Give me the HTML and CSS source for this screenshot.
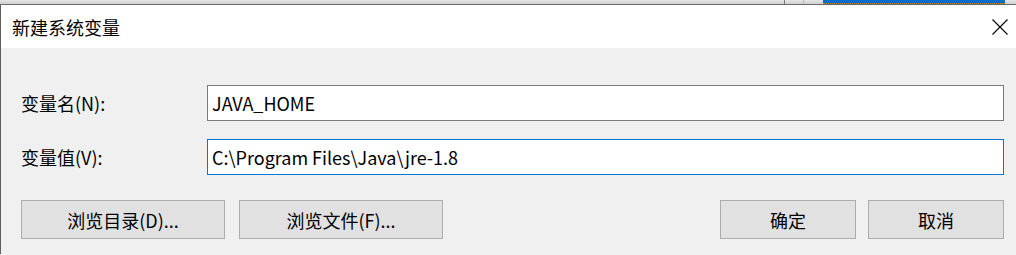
FILE: index.html
```html
<!DOCTYPE html>
<html lang="zh-CN">
<head>
<meta charset="utf-8">
<title>新建系统变量</title>
<link rel="stylesheet" href="styles.css">
</head>
<body>
<div class="backdrop">
  <div class="bg-seg bg-a"></div>
  <div class="bg-seg bg-b"></div>
  <div class="bg-seg bg-c"></div>
  <div class="bg-seg bg-blue"></div>
  <div class="bg-seg bg-d"></div>
</div>
<div class="dialog">
  <div class="titlebar">
    <span class="title">新建系统变量</span>
    <span class="close" aria-label="关闭">
      <svg width="16" height="16" viewBox="0 0 16 16"><path d="M0.5 0.5L15.5 15.5M15.5 0.5L0.5 15.5" stroke="#000" stroke-width="1.1" fill="none"/></svg>
    </span>
  </div>
  <div class="content">
    <div class="fields">
      <label class="label">变量名(N):</label>
      <div class="input">JAVA_HOME</div>
      <label class="label">变量值(V):</label>
      <div class="input focused">C:\Program Files\Java\jre-1.8</div>
    </div>
    <div class="buttons">
      <div class="btn-group">
        <button class="btn wide">浏览目录(D)...</button>
        <button class="btn wide">浏览文件(F)...</button>
      </div>
      <div class="btn-group small-gap">
        <button class="btn narrow">确定</button>
        <button class="btn narrow">取消</button>
      </div>
    </div>
  </div>
</div>
</body>
</html>
```
FILE: styles.css
```css
html, body {
  margin: 0;
  padding: 0;
}
body {
  width: 1016px;
  height: 255px;
  overflow: hidden;
  background: #f0f0f0;
  font-family: "Noto Sans CJK SC", "Noto Sans", sans-serif;
  font-size: 18px;
  color: #000;
}
.backdrop {
  height: 4px;
  display: flex;
  background: linear-gradient(#e4e4e4, #cfcfcf);
}
.bg-seg { height: 4px; }
.bg-a { width: 784px; }
.bg-b { width: 19px; border-left: 1px solid #7a7a7a; box-sizing: border-box; }
.bg-c { width: 20px; border-left: 1px solid #b8b8b8; box-sizing: border-box; }
.bg-blue {
  width: 182px;
  background: #0f6cc4;
  border-bottom: 1px dotted #c58a3a;
  box-sizing: border-box;
}
.bg-d { flex: 1; }
.dialog {
  border-top: 1px solid #6b6b6b;
  border-left: 1px solid #5e5e5e;
  height: 250px;
  box-sizing: border-box;
  background: #f0f0f0;
}
.titlebar {
  height: 43px;
  background: #fff;
  display: flex;
  align-items: center;
  justify-content: space-between;
  padding: 0 8px 0 11px;
}
.title {
  font-size: 18px;
  line-height: 1;
  padding-top: 1px;
}
.close {
  width: 16px;
  height: 16px;
  display: flex;
  margin-right: 0;
}
.close svg { display: block; }
.content {
  padding: 37px 12px 0 20px;
}
.fields {
  display: grid;
  grid-template-columns: 186px 1fr;
  row-gap: 18px;
  align-items: center;
}
.label {
  font-size: 18px;
  line-height: 1;
}
.input {
  height: 36px;
  box-sizing: border-box;
  border: 1px solid #7a7a7a;
  background: #fff;
  padding: 0 4px;
  display: flex;
  align-items: center;
  font-size: 18px;
  white-space: nowrap;
}
.input.focused {
  border-color: #0078d7;
}
.buttons {
  display: flex;
  justify-content: space-between;
  margin-top: 25px;
}
.btn-group {
  display: flex;
  gap: 14px;
}
.btn-group.small-gap { gap: 12px; }
.btn {
  height: 39px;
  box-sizing: border-box;
  border: 1px solid #adadad;
  background: #e1e1e1;
  font-family: inherit;
  font-size: 18px;
  color: #000;
  padding: 0;
  margin: 0;
}
.btn.wide { width: 204px; }
.btn.narrow { width: 136px; }
```
